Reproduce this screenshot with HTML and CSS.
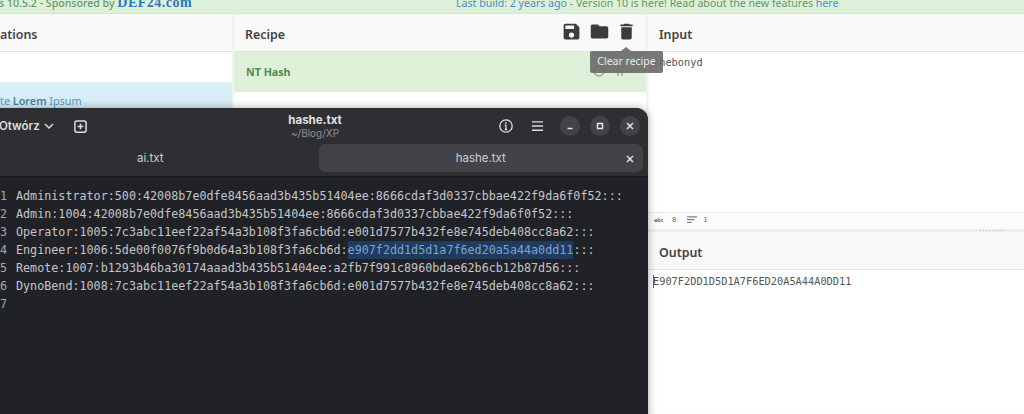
FILE: index.html
```html
<!DOCTYPE html>
<html lang="en">
<head>
<meta charset="utf-8">
<title>CyberChef</title>
<link rel="stylesheet" href="styles.css">
</head>
<body>
<div class="banner">
  <div class="banner-left">s 10.5.2 - Sponsored by <a class="sponsor">DEF24.com</a></div>
  <div class="banner-right"><a class="link">Last build: 2 years ago</a> - Version 10 is here! Read about the new features <a class="link">here</a></div>
</div>
<main class="columns">
  <section class="col col-ops">
    <header class="head head-ops">ations</header>
    <div class="search-space"></div>
    <div class="favourite">te <b>Lorem</b> Ipsum</div>
  </section>
  <section class="col col-recipe">
    <header class="head head-recipe">
      <span>Recipe</span>
      <div class="tools">
        <svg class="tool" viewBox="0 0 24 24"><path d="M17 3H5a2 2 0 0 0-2 2v14a2 2 0 0 0 2 2h14a2 2 0 0 0 2-2V7l-4-4zm-5 16a3 3 0 1 1 0-6 3 3 0 0 1 0 6zm3-10H5V5h10v4z"/></svg>
        <svg class="tool" viewBox="0 0 24 24"><path d="M10 4H4a2 2 0 0 0-2 2v12a2 2 0 0 0 2 2h16a2 2 0 0 0 2-2V8a2 2 0 0 0-2-2h-8l-2-2z"/></svg>
        <svg class="tool" viewBox="0 0 24 24"><path d="M6 19a2 2 0 0 0 2 2h8a2 2 0 0 0 2-2V7H6v12zM19 4h-3.5l-1-1h-5l-1 1H5v2h14V4z"/></svg>
      </div>
    </header>
    <div class="op-row">
      <span>NT Hash</span>
      <svg class="op-icons" viewBox="0 0 36 12"><circle cx="9" cy="6" r="5"/><path d="M28 1v10M32 1v10"/></svg>
    </div>
  </section>
  <section class="col col-io">
    <header class="head head-input">Input</header>
    <div class="input-area">thebonyd</div>
    <div class="status"><span class="abc">abc</span><span>8</span><svg class="lines" viewBox="0 0 12 10"><path d="M0 1h11M0 4h8M0 7h5" /></svg><span>1</span></div>
    <div class="divider"><span class="grip"></span></div>
    <header class="head head-output">Output</header>
    <div class="output-area"><span class="caret"></span>E907F2DD1D5D1A7F6ED20A5A44A0DD11</div>
  </section>
</main>
<div class="tooltip">Clear recipe</div>
<div class="editor">
  <div class="titlebar">
    <div class="title-left">
      <span class="open">Otwórz</span>
      <svg class="chev" viewBox="0 0 12 12"><path d="M2 4l4 4 4-4"/></svg>
      <svg class="newtab" viewBox="0 0 16 16"><rect x="2" y="2" width="12" height="12" rx="2"/><path d="M8 5v6M5 8h6"/></svg>
    </div>
    <div class="title-mid"><div class="fname">hashe.txt</div><div class="fpath">~/Blog/XP</div></div>
    <div class="title-right">
      <svg class="info" viewBox="0 0 16 16"><circle cx="8" cy="8" r="6.2"/><path d="M8 7v4.5M6.8 11.5h2.4M6.8 7H8"/><circle class="dot" cx="8" cy="4.8" r="0.9"/></svg>
      <svg class="menu" viewBox="0 0 14 12"><path d="M1 1.5h12M1 6h12M1 10.5h12"/></svg>
      <span class="winbtn"><svg viewBox="0 0 10 10"><path d="M2.5 7.5h5"/></svg></span>
      <span class="winbtn"><svg viewBox="0 0 10 10"><rect x="2.5" y="2.5" width="5" height="5"/></svg></span>
      <span class="winbtn"><svg viewBox="0 0 10 10"><path d="M2 2l6 6M8 2l-6 6"/></svg></span>
    </div>
  </div>
  <div class="tabs">
    <div class="tab">ai.txt</div>
    <div class="tab tab-active">hashe.txt<svg class="tabx" viewBox="0 0 10 10"><path d="M2 2l6 6M8 2l-6 6"/></svg></div>
  </div>
  <pre class="code"><span class="ln">1</span>Administrator:500:42008b7e0dfe8456aad3b435b51404ee:8666cdaf3d0337cbbae422f9da6f0f52:::
<span class="ln">2</span>Admin:1004:42008b7e0dfe8456aad3b435b51404ee:8666cdaf3d0337cbbae422f9da6f0f52:::
<span class="ln">3</span>Operator:1005:7c3abc11eef22af54a3b108f3fa6cb6d:e001d7577b432fe8e745deb408cc8a62:::
<span class="ln">4</span>Engineer:1006:5de00f0076f9b0d64a3b108f3fa6cb6d:<mark class="sel">e907f2dd1d5d1a7f6ed20a5a44a0dd11</mark>:::
<span class="ln">5</span>Remote:1007:b1293b46ba30174aaad3b435b51404ee:a2fb7f991c8960bdae62b6cb12b87d56:::
<span class="ln">6</span>DynoBend:1008:7c3abc11eef22af54a3b108f3fa6cb6d:e001d7577b432fe8e745deb408cc8a62:::
<span class="ln">7</span></pre>
</div>
</body>
</html>
```

FILE: styles.css
```css
* { box-sizing: border-box; }
html, body { margin: 0; height: 100%; overflow: hidden; }
body {
  position: relative;
  width: 1024px;
  height: 414px;
  background: #fff;
  font-family: "Noto Sans", "Open Sans", sans-serif;
  color: #444;
}
.banner {
  height: 14px;
  background: #dff0d8;
  color: #5d9a6b;
  font-size: 10.6px;
  font-weight: 500;
  line-height: 7px;
  display: flex;
  overflow: hidden;
  border-bottom: 1px solid #d6e7cf;
}
.banner-left { width: 457px; margin: -1px 0 0 -1px; }
.banner-right { flex: 1; white-space: nowrap; font-weight: 400; }
.sponsor { font-family: "Liberation Serif", serif; font-weight: 700; font-size: 14px; color: #2a79c4; letter-spacing: .5px; }
.link { color: #3f8fc7; }
.columns { display: flex; height: 400px; gap: 2px; background: #f2f2f2; }
.col { background: #fff; display: flex; flex-direction: column; }
.col-ops { width: 232px; }
.col-recipe { width: 412px; }
.col-io { flex: 1; box-shadow: inset 1px 0 2px rgba(0,0,0,.04); }
.head {
  height: 38px;
  flex: none;
  background: #f9f9f9;
  border-bottom: 1px solid #e2e2e2;
  font-size: 12.4px;
  font-weight: 600;
  color: #424242;
  display: flex;
  align-items: center;
  padding: 3px 0 0 11px;
}
.head-ops { padding-left: 0; }
.head-recipe { justify-content: space-between; padding-right: 9px; }
.tools { display: flex; gap: 6.5px; margin-top: -5px; }
.tool { width: 21px; height: 21px; fill: #3c3c3c; display: block; }
.search-space { height: 30px; flex: none; }
.favourite {
  height: 26px;
  padding: 11px 0 0;
  font-size: 10.8px;
  color: #4f9ac0;
  background: linear-gradient(#e4f2f9, #d9edf7 6px);
  white-space: nowrap;
}
.favourite b { font-weight: 600; color: #3f86ad; }
.op-row {
  height: 40px;
  flex: none;
  background: #dff0d8;
  color: #4b8b55;
  font-size: 10.7px;
  font-weight: 700;
  padding: 13px 0 0 12px;
  display: flex;
  justify-content: space-between;
}
.op-icons { width: 36px; height: 12px; margin: 0 20px 0 0; fill: none; stroke: #9aa696; stroke-width: 1.5; }
.input-area {
  height: 160px;
  flex: none;
  font-family: "DejaVu Sans Mono", monospace;
  font-size: 10.3px;
  line-height: 12px;
  color: #555;
  padding: 4px 0 0 5px;
}
.status {
  height: 17px;
  flex: none;
  display: flex;
  align-items: center;
  border-top: 1px solid #e6e6e6;
  background: #fbfbfb;
  font-family: "DejaVu Sans Mono", monospace;
  font-size: 7px;
  color: #666;
  padding: 0 0 2px 6px;
}
.abc { font-weight: 700; font-size: 5.5px; margin-right: 8px; }
.lines { width: 11px; height: 9px; margin: 0 5px 0 11px; fill: none; stroke: #555; stroke-width: 1; }
.divider { height: 3px; flex: none; background: #ededed; position: relative; }
.grip {
  position: absolute;
  left: 332px;
  top: 1px;
  width: 24px;
  height: 1px;
  background: repeating-linear-gradient(90deg, #bbb 0 1px, transparent 1px 3px);
}
.output-area {
  font-family: "DejaVu Sans Mono", monospace;
  font-size: 10.3px;
  line-height: 12px;
  color: #555;
  padding: 5px 0 0 5px;
  position: relative;
}
.caret { position: absolute; left: 5px; top: 5px; width: 1px; height: 13px; background: #666; }
.tooltip {
  position: absolute;
  left: 590px;
  top: 51px;
  width: 73px;
  height: 22px;
  background: rgba(105,105,105,.9);
  color: #e8e8e8;
  font-size: 10.5px;
  line-height: 21px;
  text-align: center;
  border-radius: 2px;
  white-space: nowrap;
}
.tooltip::before {
  content: "";
  position: absolute;
  left: 31px;
  top: -4px;
  border: 5px solid transparent;
  border-top: 0;
  border-bottom: 4px solid rgba(105,105,105,.9);
}
.editor {
  position: absolute;
  left: -12px;
  top: 108px;
  width: 660px;
  height: 320px;
  background: #212227;
  border-radius: 12px 12px 0 0;
  box-shadow: 0 0 8px rgba(0,0,0,.35);
  color: #dcdcdc;
  overflow: hidden;
  display: flex;
  flex-direction: column;
  font-family: "Inter", "Noto Sans", sans-serif;
}
.titlebar {
  height: 36px;
  flex: none;
  background: #2f2f33;
  display: flex;
  align-items: center;
  position: relative;
}
.title-left { display: flex; align-items: center; padding-left: 11px; font-size: 11.5px; font-weight: 600; color: #ddd; }
.chev { width: 12px; height: 12px; margin-left: 3px; fill: none; stroke: #ddd; stroke-width: 1.5; }
.newtab { width: 15px; height: 15px; margin-left: 18px; fill: none; stroke: #ddd; stroke-width: 1.6; }
.title-mid { position: absolute; left: 293px; width: 68px; text-align: center; top: 5px; }
.fname { font-size: 11.5px; font-weight: 700; color: #e2e2e2; line-height: 14px; }
.fpath { font-size: 10px; color: #8e8e90; line-height: 12px; }
.title-right { margin-left: auto; display: flex; align-items: center; padding-right: 8px; }
.info { width: 16px; height: 16px; fill: none; stroke: #ddd; stroke-width: 1.3; margin: 0 17px 0 0; }
.info .dot { fill: #ddd; stroke: none; }
.menu { width: 13px; height: 12px; fill: none; stroke: #ddd; stroke-width: 1.5; margin-right: 16px; }
.winbtn {
  width: 20px;
  height: 20px;
  border-radius: 50%;
  background: #424247;
  display: flex;
  align-items: center;
  justify-content: center;
  margin-left: 10px;
}
.winbtn:first-of-type { margin-left: 0; }
.winbtn svg { width: 10px; height: 10px; fill: none; stroke: #e4e4e4; stroke-width: 1.5; }
.tabs {
  height: 33px;
  flex: none;
  background: #2f2f33;
  display: flex;
  padding: 0 5px 4px 0;
  gap: 6px;
  border-bottom: 1px solid #1a1b1f;
}
.tab { flex: 1; font-size: 11.5px; color: #cfcfcf; display: flex; align-items: center; justify-content: center; position: relative; border-radius: 7px; }
.tab-active { background: #434347; }
.tabx { position: absolute; right: 8px; top: 10px; width: 10px; height: 10px; fill: none; stroke: #e0e0e0; stroke-width: 1.5; }
.code {
  margin: 0;
  padding: 10px 0 0 12px;
  font-family: "DejaVu Sans Mono", monospace;
  font-size: 11.72px;
  line-height: 18px;
  color: #c4c5c8;
}
.ln { display: inline-block; width: 16px; color: #a5a6a9; }
.sel { display: inline-block; background: #1f3c60; color: #7fa2cb; }
```
